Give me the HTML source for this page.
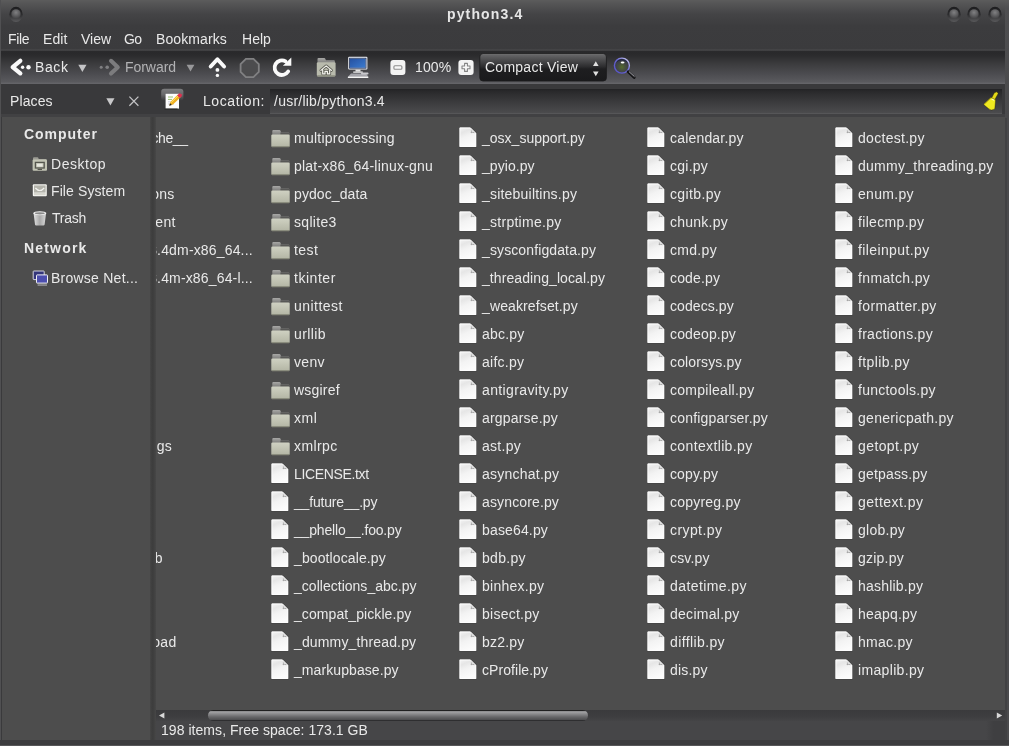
<!DOCTYPE html>
<html><head><meta charset="utf-8"><title>python3.4</title>
<style>
html,body{margin:0;padding:0}
body{width:1009px;height:746px;overflow:hidden;position:relative;background:#434345;font-family:"Liberation Sans",sans-serif;font-size:14px;color:#fff}
.t{position:absolute;will-change:transform;white-space:nowrap;line-height:16px;height:16px;color:#e9e9e9}
.b{font-weight:bold;font-size:14px}
.g{color:#b2b2b4}
.abs{position:absolute}
#title{left:0;top:0;width:1009px;height:50px;background:linear-gradient(#5c5c5c 0px,#565657 3px,#444446 14px,#3c3c3e 26px,#3b3b3d 50px)}
#tool{left:1px;top:49px;width:1004px;height:35px;background:linear-gradient(#444446 0px,#424244 1.4px,#2a2a2c 2.4px,#29292b 4px,#2c2c2e 7px,#3c3c3e 15px,#4c4c50 25px,#5a5a5e 33px,#646468 34.2px,#646468 35px)}
#locrow{left:1px;top:84px;width:1004px;height:33px;background:linear-gradient(#39393b 0,#39393b 30px,#414143 30.5px,#414143 33px)}
#entry{left:270px;top:89px;width:732px;height:25px;background:linear-gradient(#232325 0px,#2a2a2c 3px,#39393b 12px,#4b4b4d 23.6px,#565658 24.4px,#565658 25px)}
#side{left:2.2px;top:117px;width:147.8px;height:622.6px;background:#4d4d4d}
#div{left:150px;top:117px;width:6px;height:623px;background:linear-gradient(90deg,#464646,#3d3d3d 35%,#3f3f3f 60%,#474747)}
#main{left:156px;top:117px;width:849px;height:593px;background:#4d4d4d;overflow:hidden}
#hs{left:156px;top:709.5px;width:849px;height:11px;background:linear-gradient(#3a3a3c,#3e3e40 60%,#444446)}
#thumb{left:208px;top:709.6px;width:380px;height:11px;border-radius:5.5px;background:linear-gradient(#1c1c1c 0,#242424 1px,#a6a6a8 1.6px,#8a8a8c 4px,#666668 7px,#505052 9.6px,#2e2e30 10.4px,#2e2e30 11px)}
#status{left:156px;top:720.5px;width:849px;height:19.5px;background:#464648}
.ic{position:absolute}
</style></head><body>
<svg width="0" height="0" style="position:absolute">
<defs>
<linearGradient id="gf" x1="0" y1="0" x2="0" y2="1"><stop offset="0" stop-color="#cfd1c2"/><stop offset="1" stop-color="#b3b5a4"/></linearGradient>
<linearGradient id="gt" x1="0" y1="0" x2="0" y2="1"><stop offset="0" stop-color="#a8a8a6"/><stop offset="1" stop-color="#6c6c6a"/></linearGradient>
<linearGradient id="gp" x1="0" y1="0" x2="0.35" y2="1"><stop offset="0" stop-color="#f4f4f4"/><stop offset="0.28" stop-color="#e6e6e6"/><stop offset="0.55" stop-color="#f3f3f3"/><stop offset="1" stop-color="#fbfbfb"/></linearGradient>
<g id="fold">
<path d="M1.3 1 q0-1 1-1 h6 q1 0 1.3 1 l0.5 1.5 h7.2 q1 0 1 1 v3 h-17z" fill="url(#gt)"/>
<path d="M9.4 2.6 h8 q1 0 1 1 v2 h-9z" fill="#585856"/>
<rect x="0.3" y="4.6" width="18.4" height="12.4" rx="1.2" fill="url(#gf)"/>
<rect x="0.6" y="15.9" width="17.8" height="1.3" rx="0.6" fill="#8b8d7e"/>
</g>
<g id="file">
<path d="M0 0.1 h11.7 l6 6 v14.4 h-17.7z" fill="#363636" opacity="0.5"/>
<path d="M0.5 0.5 h10.9 l5.8 5.8 v13.7 h-16.7z" fill="url(#gp)"/><path d="M1 1 h10.2 l5.5 5.5 v13 h-15.7z" fill="none" stroke="#fdfdfd" stroke-width="0.9"/>
<path d="M11.4 0.5 l5.8 5.8 q-2.8-1.5-5.2-0.6 q0.9-2.4-0.6-5.2z" fill="#e2e2e2"/>
<path d="M12 5.7 q0.6-1 0.3-2.2 M12 5.7 q1.6-0.6 3.4 0" fill="none" stroke="#8e8e8e" stroke-width="0.7"/>
</g>

<linearGradient id="gscr" x1="0" y1="0" x2="1" y2="1"><stop offset="0" stop-color="#2450a0"/><stop offset="1" stop-color="#3c7cd0"/></linearGradient>
<linearGradient id="gcombo" x1="0" y1="0" x2="0" y2="1"><stop offset="0" stop-color="#949496"/><stop offset="0.05" stop-color="#646466"/><stop offset="0.3" stop-color="#434345"/><stop offset="0.48" stop-color="#2c2c2e"/><stop offset="0.56" stop-color="#1e1e20"/><stop offset="1" stop-color="#1a1a1c"/></linearGradient>
<linearGradient id="gtog" x1="0" y1="0" x2="0" y2="1"><stop offset="0" stop-color="#7c7c7e"/><stop offset="0.5" stop-color="#747476" stop-opacity="0.8"/><stop offset="1" stop-color="#6a6a6c" stop-opacity="0"/></linearGradient>
<linearGradient id="gring" x1="0" y1="1" x2="1" y2="0"><stop offset="0" stop-color="#5450c8"/><stop offset="0.55" stop-color="#6a68d4"/><stop offset="1" stop-color="#d8d8f4"/></linearGradient>
<radialGradient id="glens" cx="0.5" cy="0.6" r="0.5"><stop offset="0" stop-color="#5a7826"/><stop offset="0.55" stop-color="#46503f"/><stop offset="1" stop-color="#3a3c4c"/></radialGradient>
<linearGradient id="gtrash" x1="0" y1="0" x2="1" y2="0"><stop offset="0" stop-color="#e0e0e0"/><stop offset="0.5" stop-color="#a8a8a8"/><stop offset="1" stop-color="#d8d8d8"/></linearGradient>
<radialGradient id="gwb" cx="0.5" cy="0.35" r="0.6"><stop offset="0" stop-color="#808082"/><stop offset="1" stop-color="#48484a"/></radialGradient>
<linearGradient id="gwr" x1="0" y1="0" x2="0" y2="1"><stop offset="0" stop-color="#1c1c1e"/><stop offset="0.5" stop-color="#2c2c2e"/><stop offset="1" stop-color="#5a5a5c"/></linearGradient>
<g id="wbtn">
<ellipse cx="11" cy="10.4" rx="6.7" ry="7.6" fill="url(#gwr)"/>
<circle cx="11" cy="9.9" r="4.7" fill="url(#gwb)"/>
</g>
</defs></svg>

<div id="title" class="abs"></div>
<div class="abs" style="left:0;top:0;width:1.1px;height:746px;background:#505052"></div><div class="abs" style="left:1.1px;top:117px;width:1.2px;height:625px;background:#3a3a3c"></div>
<div class="abs" style="left:1005px;top:0;width:4px;height:746px;background:linear-gradient(#5c5c5c 0,#4f4f51 8px,#4c4c4e 60px,#4a4a4c 120px,#4a4a4c 746px)"></div><div class="abs" style="left:1005px;top:118px;width:2px;height:622px;background:#414143"></div>
<div class="abs" style="left:0;top:739.6px;width:1009px;height:6.4px;background:linear-gradient(#3c3c3e 0,#3c3c3e 4.9px,#565658 5.1px,#565658 6.4px)"></div>
<div class="t b" style="left:447.0px;top:5.95px;letter-spacing:1.139px;color:#e6e6e6">python3.4</div>
<div class="t " style="left:8px;top:31.15px;letter-spacing:-0.33px;">File</div>
<div class="t " style="left:43px;top:31.15px;letter-spacing:0.111px;">Edit</div>
<div class="t " style="left:81px;top:31.15px;letter-spacing:0.002px;">View</div>
<div class="t " style="left:124px;top:31.15px;letter-spacing:-0.537px;">Go</div>
<div class="t " style="left:156px;top:31.15px;letter-spacing:0.098px;">Bookmarks</div>
<div class="t " style="left:242px;top:31.15px;letter-spacing:0.037px;">Help</div>
<div id="tool" class="abs"></div>
<div id="locrow" class="abs"></div>
<div id="entry" class="abs"></div>
<div id="side" class="abs"></div>
<div id="div" class="abs"></div>
<div id="main" class="abs">
<svg class="ic" style="left:-73px;top:13px" width="19" height="18"><use href="#fold"/></svg>
<div class="t " style="left:-47.5px;top:13.15px;letter-spacing:-0.433px;">__pycache__</div>
<svg class="ic" style="left:-73px;top:41px" width="19" height="18"><use href="#fold"/></svg>
<div class="t " style="left:-50px;top:41.15px;letter-spacing:0.103px;">asyncio</div>
<svg class="ic" style="left:-73px;top:69px" width="19" height="18"><use href="#fold"/></svg>
<div class="t " style="left:-49px;top:69.15px;letter-spacing:0.192px;">collections</div>
<svg class="ic" style="left:-73px;top:97px" width="19" height="18"><use href="#fold"/></svg>
<div class="t " style="left:-49px;top:97.15px;letter-spacing:0.241px;">concurrent</div>
<svg class="ic" style="left:-73px;top:125px" width="19" height="18"><use href="#fold"/></svg>
<div class="t " style="left:-50px;top:125.15px;letter-spacing:0.163px;">config-3.4dm-x86_64...</div>
<svg class="ic" style="left:-73px;top:153px" width="19" height="18"><use href="#fold"/></svg>
<div class="t " style="left:-50px;top:153.15px;letter-spacing:0.159px;">config-3.4m-x86_64-l...</div>
<svg class="ic" style="left:-73px;top:181px" width="19" height="18"><use href="#fold"/></svg>
<div class="t " style="left:-50px;top:181.15px;letter-spacing:0.242px;">ctypes</div>
<svg class="ic" style="left:-73px;top:209px" width="19" height="18"><use href="#fold"/></svg>
<div class="t " style="left:-50px;top:209.15px;letter-spacing:0.003px;">curses</div>
<svg class="ic" style="left:-73px;top:237px" width="19" height="18"><use href="#fold"/></svg>
<div class="t " style="left:-50px;top:237.15px;letter-spacing:0.413px;">dbm</div>
<svg class="ic" style="left:-73px;top:265px" width="19" height="18"><use href="#fold"/></svg>
<div class="t " style="left:-50px;top:265.15px;letter-spacing:0.348px;">distutils</div>
<svg class="ic" style="left:-73px;top:293px" width="19" height="18"><use href="#fold"/></svg>
<div class="t " style="left:-50px;top:293.15px;letter-spacing:0.309px;">email</div>
<svg class="ic" style="left:-73px;top:321px" width="19" height="18"><use href="#fold"/></svg>
<div class="t " style="left:-49.2px;top:321.15px;letter-spacing:0.116px;">encodings</div>
<svg class="ic" style="left:-73px;top:349px" width="19" height="18"><use href="#fold"/></svg>
<div class="t " style="left:-50px;top:349.15px;letter-spacing:0.611px;">html</div>
<svg class="ic" style="left:-73px;top:377px" width="19" height="18"><use href="#fold"/></svg>
<svg class="ic" style="left:-73px;top:405px" width="19" height="18"><use href="#fold"/></svg>
<div class="t " style="left:-50px;top:405.15px;letter-spacing:0.317px;">idlelib</div>
<svg class="ic" style="left:-73px;top:433px" width="19" height="18"><use href="#fold"/></svg>
<div class="t " style="left:-50px;top:433.15px;letter-spacing:0.455px;">importlib</div>
<svg class="ic" style="left:-73px;top:461px" width="19" height="18"><use href="#fold"/></svg>
<div class="t " style="left:-50px;top:461.15px;letter-spacing:0.063px;">json</div>
<svg class="ic" style="left:-73px;top:489px" width="19" height="18"><use href="#fold"/></svg>
<div class="t " style="left:-50px;top:489.15px;letter-spacing:0.39px;">lib2to3</div>
<svg class="ic" style="left:-73px;top:517px" width="19" height="18"><use href="#fold"/></svg>
<div class="t " style="left:-50px;top:517.15px;letter-spacing:0.246px;">lib-dynload</div>
<svg class="ic" style="left:-73px;top:545px" width="19" height="18"><use href="#fold"/></svg>
<div class="t " style="left:-50px;top:545.15px;letter-spacing:0.268px;">logging</div>
<svg class="ic" style="left:115px;top:13px" width="19" height="18"><use href="#fold"/></svg>
<div class="t " style="left:138px;top:13.15px;letter-spacing:0.236px;">multiprocessing</div>
<svg class="ic" style="left:115px;top:41px" width="19" height="18"><use href="#fold"/></svg>
<div class="t " style="left:138px;top:41.15px;letter-spacing:0.207px;">plat-x86_64-linux-gnu</div>
<svg class="ic" style="left:115px;top:69px" width="19" height="18"><use href="#fold"/></svg>
<div class="t " style="left:138px;top:69.15px;letter-spacing:0.09px;">pydoc_data</div>
<svg class="ic" style="left:115px;top:97px" width="19" height="18"><use href="#fold"/></svg>
<div class="t " style="left:138px;top:97.15px;letter-spacing:0.299px;">sqlite3</div>
<svg class="ic" style="left:115px;top:125px" width="19" height="18"><use href="#fold"/></svg>
<div class="t " style="left:138px;top:125.15px;letter-spacing:0.448px;">test</div>
<svg class="ic" style="left:115px;top:153px" width="19" height="18"><use href="#fold"/></svg>
<div class="t " style="left:138px;top:153.15px;letter-spacing:0.538px;">tkinter</div>
<svg class="ic" style="left:115px;top:181px" width="19" height="18"><use href="#fold"/></svg>
<div class="t " style="left:138px;top:181.15px;letter-spacing:0.475px;">unittest</div>
<svg class="ic" style="left:115px;top:209px" width="19" height="18"><use href="#fold"/></svg>
<div class="t " style="left:138px;top:209.15px;letter-spacing:0.388px;">urllib</div>
<svg class="ic" style="left:115px;top:237px" width="19" height="18"><use href="#fold"/></svg>
<div class="t " style="left:138px;top:237.15px;letter-spacing:0.322px;">venv</div>
<svg class="ic" style="left:115px;top:265px" width="19" height="18"><use href="#fold"/></svg>
<div class="t " style="left:138px;top:265.15px;letter-spacing:0.205px;">wsgiref</div>
<svg class="ic" style="left:115px;top:293px" width="19" height="18"><use href="#fold"/></svg>
<div class="t " style="left:138px;top:293.15px;letter-spacing:0.538px;">xml</div>
<svg class="ic" style="left:115px;top:321px" width="19" height="18"><use href="#fold"/></svg>
<div class="t " style="left:138px;top:321.15px;letter-spacing:0.402px;">xmlrpc</div>
<svg class="ic" style="left:115px;top:346px" width="18" height="21"><use href="#file"/></svg>
<div class="t " style="left:138px;top:349.15px;letter-spacing:-0.352px;">LICENSE.txt</div>
<svg class="ic" style="left:115px;top:374px" width="18" height="21"><use href="#file"/></svg>
<div class="t " style="left:138px;top:377.15px;letter-spacing:-0.181px;">__future__.py</div>
<svg class="ic" style="left:115px;top:402px" width="18" height="21"><use href="#file"/></svg>
<div class="t " style="left:138px;top:405.15px;letter-spacing:-0.178px;">__phello__.foo.py</div>
<svg class="ic" style="left:115px;top:430px" width="18" height="21"><use href="#file"/></svg>
<div class="t " style="left:138px;top:433.15px;letter-spacing:0.113px;">_bootlocale.py</div>
<svg class="ic" style="left:115px;top:458px" width="18" height="21"><use href="#file"/></svg>
<div class="t " style="left:138px;top:461.15px;letter-spacing:0.02px;">_collections_abc.py</div>
<svg class="ic" style="left:115px;top:486px" width="18" height="21"><use href="#file"/></svg>
<div class="t " style="left:138px;top:489.15px;letter-spacing:0.087px;">_compat_pickle.py</div>
<svg class="ic" style="left:115px;top:514px" width="18" height="21"><use href="#file"/></svg>
<div class="t " style="left:138px;top:517.15px;letter-spacing:0.148px;">_dummy_thread.py</div>
<svg class="ic" style="left:115px;top:542px" width="18" height="21"><use href="#file"/></svg>
<div class="t " style="left:138px;top:545.15px;letter-spacing:0.079px;">_markupbase.py</div>
<svg class="ic" style="left:303px;top:10px" width="18" height="21"><use href="#file"/></svg>
<div class="t " style="left:326px;top:13.15px;letter-spacing:0.01px;">_osx_support.py</div>
<svg class="ic" style="left:303px;top:38px" width="18" height="21"><use href="#file"/></svg>
<div class="t " style="left:326px;top:41.15px;letter-spacing:0.051px;">_pyio.py</div>
<svg class="ic" style="left:303px;top:66px" width="18" height="21"><use href="#file"/></svg>
<div class="t " style="left:326px;top:69.15px;letter-spacing:0.206px;">_sitebuiltins.py</div>
<svg class="ic" style="left:303px;top:94px" width="18" height="21"><use href="#file"/></svg>
<div class="t " style="left:326px;top:97.15px;letter-spacing:0.267px;">_strptime.py</div>
<svg class="ic" style="left:303px;top:122px" width="18" height="21"><use href="#file"/></svg>
<div class="t " style="left:326px;top:125.15px;letter-spacing:0.117px;">_sysconfigdata.py</div>
<svg class="ic" style="left:303px;top:150px" width="18" height="21"><use href="#file"/></svg>
<div class="t " style="left:326px;top:153.15px;letter-spacing:0.087px;">_threading_local.py</div>
<svg class="ic" style="left:303px;top:178px" width="18" height="21"><use href="#file"/></svg>
<div class="t " style="left:326px;top:181.15px;letter-spacing:0.122px;">_weakrefset.py</div>
<svg class="ic" style="left:303px;top:206px" width="18" height="21"><use href="#file"/></svg>
<div class="t " style="left:326px;top:209.15px;letter-spacing:0.191px;">abc.py</div>
<svg class="ic" style="left:303px;top:234px" width="18" height="21"><use href="#file"/></svg>
<div class="t " style="left:326px;top:237.15px;letter-spacing:0.267px;">aifc.py</div>
<svg class="ic" style="left:303px;top:262px" width="18" height="21"><use href="#file"/></svg>
<div class="t " style="left:326px;top:265.15px;letter-spacing:0.371px;">antigravity.py</div>
<svg class="ic" style="left:303px;top:290px" width="18" height="21"><use href="#file"/></svg>
<div class="t " style="left:326px;top:293.15px;letter-spacing:0.178px;">argparse.py</div>
<svg class="ic" style="left:303px;top:318px" width="18" height="21"><use href="#file"/></svg>
<div class="t " style="left:326px;top:321.15px;letter-spacing:0.265px;">ast.py</div>
<svg class="ic" style="left:303px;top:346px" width="18" height="21"><use href="#file"/></svg>
<div class="t " style="left:326px;top:349.15px;letter-spacing:0.234px;">asynchat.py</div>
<svg class="ic" style="left:303px;top:374px" width="18" height="21"><use href="#file"/></svg>
<div class="t " style="left:326px;top:377.15px;letter-spacing:0.139px;">asyncore.py</div>
<svg class="ic" style="left:303px;top:402px" width="18" height="21"><use href="#file"/></svg>
<div class="t " style="left:326px;top:405.15px;letter-spacing:0.153px;">base64.py</div>
<svg class="ic" style="left:303px;top:430px" width="18" height="21"><use href="#file"/></svg>
<div class="t " style="left:326px;top:433.15px;letter-spacing:0.287px;">bdb.py</div>
<svg class="ic" style="left:303px;top:458px" width="18" height="21"><use href="#file"/></svg>
<div class="t " style="left:326px;top:461.15px;letter-spacing:0.267px;">binhex.py</div>
<svg class="ic" style="left:303px;top:486px" width="18" height="21"><use href="#file"/></svg>
<div class="t " style="left:326px;top:489.15px;letter-spacing:0.253px;">bisect.py</div>
<svg class="ic" style="left:303px;top:514px" width="18" height="21"><use href="#file"/></svg>
<div class="t " style="left:326px;top:517.15px;letter-spacing:0.188px;">bz2.py</div>
<svg class="ic" style="left:303px;top:542px" width="18" height="21"><use href="#file"/></svg>
<div class="t " style="left:326px;top:545.15px;letter-spacing:0.06px;">cProfile.py</div>
<svg class="ic" style="left:491px;top:10px" width="18" height="21"><use href="#file"/></svg>
<div class="t " style="left:514px;top:13.15px;letter-spacing:0.182px;">calendar.py</div>
<svg class="ic" style="left:491px;top:38px" width="18" height="21"><use href="#file"/></svg>
<div class="t " style="left:514px;top:41.15px;letter-spacing:0.26px;">cgi.py</div>
<svg class="ic" style="left:491px;top:66px" width="18" height="21"><use href="#file"/></svg>
<div class="t " style="left:514px;top:69.15px;letter-spacing:0.364px;">cgitb.py</div>
<svg class="ic" style="left:491px;top:94px" width="18" height="21"><use href="#file"/></svg>
<div class="t " style="left:514px;top:97.15px;letter-spacing:0.249px;">chunk.py</div>
<svg class="ic" style="left:491px;top:122px" width="18" height="21"><use href="#file"/></svg>
<div class="t " style="left:514px;top:125.15px;letter-spacing:0.308px;">cmd.py</div>
<svg class="ic" style="left:491px;top:150px" width="18" height="21"><use href="#file"/></svg>
<div class="t " style="left:514px;top:153.15px;letter-spacing:0.165px;">code.py</div>
<svg class="ic" style="left:491px;top:178px" width="18" height="21"><use href="#file"/></svg>
<div class="t " style="left:514px;top:181.15px;letter-spacing:0.081px;">codecs.py</div>
<svg class="ic" style="left:491px;top:206px" width="18" height="21"><use href="#file"/></svg>
<div class="t " style="left:514px;top:209.15px;letter-spacing:0.157px;">codeop.py</div>
<svg class="ic" style="left:491px;top:234px" width="18" height="21"><use href="#file"/></svg>
<div class="t " style="left:514px;top:237.15px;letter-spacing:0.138px;">colorsys.py</div>
<svg class="ic" style="left:491px;top:262px" width="18" height="21"><use href="#file"/></svg>
<div class="t " style="left:514px;top:265.15px;letter-spacing:0.269px;">compileall.py</div>
<svg class="ic" style="left:491px;top:290px" width="18" height="21"><use href="#file"/></svg>
<div class="t " style="left:514px;top:293.15px;letter-spacing:0.2px;">configparser.py</div>
<svg class="ic" style="left:491px;top:318px" width="18" height="21"><use href="#file"/></svg>
<div class="t " style="left:514px;top:321.15px;letter-spacing:0.36px;">contextlib.py</div>
<svg class="ic" style="left:491px;top:346px" width="18" height="21"><use href="#file"/></svg>
<div class="t " style="left:514px;top:349.15px;letter-spacing:0.121px;">copy.py</div>
<svg class="ic" style="left:491px;top:374px" width="18" height="21"><use href="#file"/></svg>
<div class="t " style="left:514px;top:377.15px;letter-spacing:0.222px;">copyreg.py</div>
<svg class="ic" style="left:491px;top:402px" width="18" height="21"><use href="#file"/></svg>
<div class="t " style="left:514px;top:405.15px;letter-spacing:0.412px;">crypt.py</div>
<svg class="ic" style="left:491px;top:430px" width="18" height="21"><use href="#file"/></svg>
<div class="t " style="left:514px;top:433.15px;letter-spacing:0.171px;">csv.py</div>
<svg class="ic" style="left:491px;top:458px" width="18" height="21"><use href="#file"/></svg>
<div class="t " style="left:514px;top:461.15px;letter-spacing:0.409px;">datetime.py</div>
<svg class="ic" style="left:491px;top:486px" width="18" height="21"><use href="#file"/></svg>
<div class="t " style="left:514px;top:489.15px;letter-spacing:0.27px;">decimal.py</div>
<svg class="ic" style="left:491px;top:514px" width="18" height="21"><use href="#file"/></svg>
<div class="t " style="left:514px;top:517.15px;letter-spacing:0.39px;">difflib.py</div>
<svg class="ic" style="left:491px;top:542px" width="18" height="21"><use href="#file"/></svg>
<div class="t " style="left:514px;top:545.15px;letter-spacing:0.199px;">dis.py</div>
<svg class="ic" style="left:679px;top:10px" width="18" height="21"><use href="#file"/></svg>
<div class="t " style="left:702px;top:13.15px;letter-spacing:0.292px;">doctest.py</div>
<svg class="ic" style="left:679px;top:38px" width="18" height="21"><use href="#file"/></svg>
<div class="t " style="left:702px;top:41.15px;letter-spacing:0.264px;">dummy_threading.py</div>
<svg class="ic" style="left:679px;top:66px" width="18" height="21"><use href="#file"/></svg>
<div class="t " style="left:702px;top:69.15px;letter-spacing:0.306px;">enum.py</div>
<svg class="ic" style="left:679px;top:94px" width="18" height="21"><use href="#file"/></svg>
<div class="t " style="left:702px;top:97.15px;letter-spacing:0.328px;">filecmp.py</div>
<svg class="ic" style="left:679px;top:122px" width="18" height="21"><use href="#file"/></svg>
<div class="t " style="left:702px;top:125.15px;letter-spacing:0.385px;">fileinput.py</div>
<svg class="ic" style="left:679px;top:150px" width="18" height="21"><use href="#file"/></svg>
<div class="t " style="left:702px;top:153.15px;letter-spacing:0.374px;">fnmatch.py</div>
<svg class="ic" style="left:679px;top:178px" width="18" height="21"><use href="#file"/></svg>
<div class="t " style="left:702px;top:181.15px;letter-spacing:0.404px;">formatter.py</div>
<svg class="ic" style="left:679px;top:206px" width="18" height="21"><use href="#file"/></svg>
<div class="t " style="left:702px;top:209.15px;letter-spacing:0.279px;">fractions.py</div>
<svg class="ic" style="left:679px;top:234px" width="18" height="21"><use href="#file"/></svg>
<div class="t " style="left:702px;top:237.15px;letter-spacing:0.412px;">ftplib.py</div>
<svg class="ic" style="left:679px;top:262px" width="18" height="21"><use href="#file"/></svg>
<div class="t " style="left:702px;top:265.15px;letter-spacing:0.252px;">functools.py</div>
<svg class="ic" style="left:679px;top:290px" width="18" height="21"><use href="#file"/></svg>
<div class="t " style="left:702px;top:293.15px;letter-spacing:0.288px;">genericpath.py</div>
<svg class="ic" style="left:679px;top:318px" width="18" height="21"><use href="#file"/></svg>
<div class="t " style="left:702px;top:321.15px;letter-spacing:0.402px;">getopt.py</div>
<svg class="ic" style="left:679px;top:346px" width="18" height="21"><use href="#file"/></svg>
<div class="t " style="left:702px;top:349.15px;letter-spacing:0.176px;">getpass.py</div>
<svg class="ic" style="left:679px;top:374px" width="18" height="21"><use href="#file"/></svg>
<div class="t " style="left:702px;top:377.15px;letter-spacing:0.475px;">gettext.py</div>
<svg class="ic" style="left:679px;top:402px" width="18" height="21"><use href="#file"/></svg>
<div class="t " style="left:702px;top:405.15px;letter-spacing:0.264px;">glob.py</div>
<svg class="ic" style="left:679px;top:430px" width="18" height="21"><use href="#file"/></svg>
<div class="t " style="left:702px;top:433.15px;letter-spacing:0.218px;">gzip.py</div>
<svg class="ic" style="left:679px;top:458px" width="18" height="21"><use href="#file"/></svg>
<div class="t " style="left:702px;top:461.15px;letter-spacing:0.212px;">hashlib.py</div>
<svg class="ic" style="left:679px;top:486px" width="18" height="21"><use href="#file"/></svg>
<div class="t " style="left:702px;top:489.15px;letter-spacing:0.216px;">heapq.py</div>
<svg class="ic" style="left:679px;top:514px" width="18" height="21"><use href="#file"/></svg>
<div class="t " style="left:702px;top:517.15px;letter-spacing:0.261px;">hmac.py</div>
<svg class="ic" style="left:679px;top:542px" width="18" height="21"><use href="#file"/></svg>
<div class="t " style="left:702px;top:545.15px;letter-spacing:0.338px;">imaplib.py</div>
</div>
<div id="hs" class="abs"></div>
<div id="thumb" class="abs"></div>
<div id="status" class="abs"></div><div class="abs" style="left:986px;top:720.5px;width:19px;height:19.5px;background:linear-gradient(90deg,rgba(62,62,64,0),#3f3f41 40%,#3f3f41)"></div>
<div class="t " style="left:161.0px;top:722.15px;letter-spacing:0.048px;">198 items, Free space: 173.1 GB</div>

<!-- window buttons -->
<svg class="ic" style="left:4.5px;top:3.6px" width="22" height="22"><use href="#wbtn"/></svg>
<svg class="ic" style="left:943px;top:3.6px" width="22" height="22"><use href="#wbtn"/></svg>
<svg class="ic" style="left:963px;top:3.6px" width="22" height="22"><use href="#wbtn"/></svg>
<svg class="ic" style="left:984px;top:3.6px" width="22" height="22"><use href="#wbtn"/></svg>

<!-- toolbar icons -->
<svg class="ic" style="left:0;top:50px" width="660" height="36">
 <!-- back -->
 <path d="M20.3 10.9 L12.7 17.1 L20.3 23.3" fill="none" stroke="#fafafa" stroke-width="4.3" stroke-linecap="round" stroke-linejoin="round"/>
 <circle cx="22.6" cy="17.3" r="1.7" fill="#fafafa"/><circle cx="28.5" cy="17.3" r="2.2" fill="#fafafa"/>
 <path d="M78.3 14.8 h8.2 l-4.1 7.2z" fill="#c4c4c6"/>
 <!-- forward -->
 <path d="M111 10.8 L117.8 17.2 L111 23.6" fill="none" stroke="#7c7c7e" stroke-width="4.1" stroke-linecap="round" stroke-linejoin="round"/>
 <circle cx="101.2" cy="17.2" r="1.5" fill="#808082"/><circle cx="107.2" cy="17.2" r="1.8" fill="#808082"/>
 <path d="M186.6 14.8 h7.8 l-3.9 6.8z" fill="#98989a"/>
 <!-- up -->
 <path d="M210.7 16.5 L217.4 9.2 L224.1 16.5" fill="none" stroke="#fafafa" stroke-width="3.9" stroke-linecap="round" stroke-linejoin="round"/>
 <circle cx="217.4" cy="19.9" r="1.9" fill="#fafafa"/><circle cx="217.4" cy="25.4" r="1.7" fill="#fafafa"/>
 <!-- stop -->
 <path d="M245.9 8.9 h7.6 l5.3 5.3 v7.6 l-5.3 5.3 h-7.6 l-5.3-5.3 v-7.6z" fill="#4c4c4e" stroke="#808082" stroke-width="1.8"/>
 <!-- reload -->
 <path d="M288.2 21.4 A7.3 7.3 0 1 1 285.6 11.4" fill="none" stroke="#fafafa" stroke-width="3.8" stroke-linecap="round"/>
 <path d="M291.3 7.4 v8.4 h-8.4z" fill="#fafafa"/>
 <!-- home folder -->
 <path d="M317.5 9 q0-1 1-1 h5.6 q1 0 1.3 1 l0.5 1.3 h8 q1 0 1 1 v4 h-17.4z" fill="url(#gt)"/>
 <rect x="316.8" y="12.2" width="18.8" height="14.2" rx="1.3" fill="#b9bbad"/>
 <rect x="317" y="25.2" width="18.2" height="1.4" rx="0.6" fill="#8b8d7e"/>
 <path d="M320.9 20.4 L326.2 15.9 L331.5 20.4 M322.7 19.9 v4 h2.3 v-2.5 h2.4 v2.5 h2.3 v-4" fill="none" stroke="#5e5f56" stroke-width="2.8" stroke-linejoin="round" stroke-linecap="round"/>
 <path d="M320.9 20.4 L326.2 15.9 L331.5 20.4 M322.7 19.9 v4 h2.3 v-2.5 h2.4 v2.5 h2.3 v-4" fill="none" stroke="#f4f4ee" stroke-width="1.2" stroke-linejoin="round" stroke-linecap="round"/>
 <!-- computer -->
 <rect x="348.2" y="6.8" width="19.2" height="12.8" rx="1" fill="#f2f4f8"/>
 <rect x="350" y="8.6" width="15.6" height="9.2" fill="url(#gscr)"/>
 <rect x="349.6" y="8.2" width="16.4" height="10" fill="none" stroke="#1a2c55" stroke-width="0.8"/>
 <rect x="355.5" y="19.6" width="5" height="2" fill="#e4e4e4"/>
 <rect x="353" y="21.4" width="10" height="1.4" rx="0.7" fill="#f0f0f0"/>
 <path d="M351 23.4 h15 l2.4 3.4 h-20.4z" fill="#a4a4aa"/>
 <rect x="347.8" y="26.6" width="20.6" height="1.5" rx="0.7" fill="#f4f4f4"/>
 <rect x="361" y="22.6" width="7.5" height="1.8" rx="0.9" fill="#c8c8cc"/>
 <!-- zoom out -->
 <rect x="390.4" y="9.9" width="15" height="15" rx="3" fill="#f3f3f3"/>
 <rect x="393.9" y="15.7" width="8" height="3.6" rx="1" fill="#f8f8f8" stroke="#8c8c8c" stroke-width="1.1"/>
 <!-- zoom in -->
 <rect x="458.4" y="9.9" width="15.2" height="15" rx="3" fill="#f3f3f3"/>
 <path d="M464.6 13.4 h2.8 v2.6 h2.6 v2.8 h-2.6 v2.6 h-2.8 v-2.6 h-2.6 v-2.8 h2.6z" fill="#f8f8f8" stroke="#848484" stroke-width="1.1" stroke-linejoin="round"/>
 <!-- combo -->
 <rect x="479.8" y="3.7" width="126.6" height="27.3" rx="3.2" fill="url(#gcombo)"/>
 <rect x="479.8" y="3.7" width="126.6" height="27.3" rx="3.2" fill="none" stroke="#1a1a1c" stroke-width="0.8"/>
 <path d="M593 16 l2.8 -4.8 l2.8 4.8z M593 21.4 h5.6 l-2.8 4.8z" fill="#e0e0e0"/>
 <!-- search -->
 <circle cx="621.9" cy="15.6" r="7" fill="url(#glens)" opacity="0.75"/>
 <path d="M616.4 12.4 A6.4 6.4 0 0 1 627.4 12.4 A8 8 0 0 0 616.4 12.4z" fill="#1c2040"/>
 <circle cx="621.9" cy="15.6" r="7.5" fill="none" stroke="url(#gring)" stroke-width="1.4"/>
 <ellipse cx="622.6" cy="12.4" rx="1.9" ry="1" fill="#ffffff"/>
 <path d="M628.2 21.8 L634.2 27.6" stroke="#141416" stroke-width="2.8" stroke-linecap="round"/>
 <path d="M629.2 21.8 L634.2 26.4" stroke="#b8b8c0" stroke-width="0.9" stroke-linecap="round"/>
</svg>

<!-- location row icons -->
<svg class="ic" style="left:0;top:84px" width="1009" height="34">
 <path d="M106.3 14.2 h8.2 l-4.1 7.4z" fill="#c8c8ca"/>
 <path d="M129.4 12.6 l9 9.2 M138.4 12.6 l-9 9.2" stroke="#c4c4c6" stroke-width="1.25" fill="none"/>
 <!-- edit toggle -->
 <rect x="161.2" y="4.8" width="22.2" height="12" rx="3" fill="url(#gtog)"/>
 <rect x="165.6" y="9.8" width="13.4" height="14.8" fill="#fdfdfd"/>
 <rect x="164.6" y="24.6" width="13" height="1.2" fill="#2a2a2a"/>
 <path d="M168 13 h5 M168 15.4 h4" stroke="#9ac070" stroke-width="1"/>
 <path d="M168 17.8 h3 M168 20 h6" stroke="#c8c8d8" stroke-width="0.8"/>
 <path d="M169.4 21.4 l1-3.4 l7.6-7.4 l2.6 2.6 l-7.6 7.4z" fill="#f0b020"/>
 <path d="M171.2 18.6 l7-6.8" stroke="#ffe060" stroke-width="1"/>
 <path d="M177.2 11.4 l1.8-1.8 q1.6-0.4 2.4 0.6 q0.8 1.2 0.2 2 l-1.8 1.8z" fill="#e03050"/>
 <path d="M169.2 21.8 l0.8-2.6 l1.9 1.9z" fill="#202020"/>
 <!-- broom -->
 <path d="M994.2 9 L996.6 7.8 L998.2 9.6 L994.6 16 L991.4 14.4z" fill="#e4d818" stroke="#2a2600" stroke-width="0.7" stroke-opacity="0.6"/>
 <path d="M991 13.6 L995.6 15.8 L994.8 25 Q991 27.4 988.4 24.6 L983.6 20.6z" fill="#f0ea20" stroke="#2a2600" stroke-width="0.7" stroke-opacity="0.6"/><path d="M991.6 15 l2.4 1.2" stroke="#fff8c0" stroke-width="1.2"/>
 <path d="M990.8 14 L984 20.4" stroke="#b8a810" stroke-width="0.8"/>
</svg>

<!-- sidebar icons -->
<svg class="ic" style="left:0;top:150px" width="60" height="140">
 <!-- desktop -->
 <path d="M33 8.2 q0-1 1-1 h3.4 q0.8 0 1 0.8 l0.3 1 h7 q0.9 0 0.9 0.9 v2 h-13.6z" fill="#9c9c94"/>
 <rect x="32.6" y="9.6" width="14.4" height="11.2" rx="1" fill="#c2c4b4"/>
 <rect x="35.4" y="12.4" width="8.8" height="5.6" fill="none" stroke="#55564e" stroke-width="1.3"/>
 <path d="M37.6 19.4 h4.4" stroke="#55564e" stroke-width="1.2"/>
 <rect x="37" y="13.8" width="5.6" height="2.8" fill="#e8e8e0"/>
 <!-- filesystem -->
 <rect x="32.8" y="34.2" width="14" height="12" rx="1" fill="#f6f6f2"/>
 <rect x="34" y="35.4" width="11.6" height="7.2" fill="#b4b4ac"/>
 <path d="M35.4 38 q4.4 5 8.8 0" fill="none" stroke="#f4f4f0" stroke-width="1.2"/>
 <rect x="34" y="43" width="11.6" height="2.2" fill="#d8d8d0"/>
 <!-- trash -->
 <path d="M33.6 63.6 h12.4 l-1.4 11 q-0.2 1-1.2 1 h-7.2 q-1 0-1.2-1z" fill="url(#gtrash)"/>
 <ellipse cx="39.8" cy="63.2" rx="6.6" ry="2" fill="#f4f4f4"/>
 <ellipse cx="39.8" cy="63.3" rx="5" ry="1.1" fill="#8a8a8a"/>
 <!-- network -->
 <rect x="33.2" y="121" width="11" height="8.6" rx="0.6" fill="#34367a" stroke="#e4e4ec" stroke-width="0.9"/>
 <rect x="36.5" y="124.9" width="11" height="8.2" rx="0.6" fill="#4c4eae" stroke="#f0f0f6" stroke-width="1"/>
 <rect x="37.6" y="134.4" width="9.4" height="1.3" fill="#a0a0a4"/>
</svg>

<!-- scrollbar arrows -->
<svg class="ic" style="left:155px;top:710px" width="850" height="11">
 <path d="M9.4 2.5 v6 l-5.4-3z" fill="#d8d8d8"/>
 <path d="M841.8 2.5 v6 l5.4-3z" fill="#d8d8d8"/>
</svg>

<div class="t " style="left:35.3px;top:59.15px;letter-spacing:0.62px;">Back</div>
<div class="t g" style="left:125.0px;top:59.15px;letter-spacing:-0.043px;">Forward</div>
<div class="t " style="left:415.0px;top:59.15px;letter-spacing:0.117px;">100%</div>
<div class="t " style="left:484.8px;top:59.15px;letter-spacing:0.254px;">Compact View</div>
<div class="t " style="left:9.5px;top:93.15px;letter-spacing:0.12px;">Places</div>
<div class="t " style="left:203.3px;top:93.15px;letter-spacing:0.575px;">Location:</div>
<div class="t " style="left:274.0px;top:93.15px;letter-spacing:0.237px;">/usr/lib/python3.4</div>
<div class="t b" style="left:24.0px;top:126.15px;letter-spacing:0.967px;">Computer</div>
<div class="t " style="left:51.0px;top:156.15px;letter-spacing:0.54px;">Desktop</div>
<div class="t " style="left:51.0px;top:183.15px;letter-spacing:0.099px;">File System</div>
<div class="t " style="left:52.0px;top:210.15px;letter-spacing:-0.246px;">Trash</div>
<div class="t b" style="left:24.0px;top:240.15px;letter-spacing:1.176px;">Network</div>
<div class="t " style="left:51.0px;top:270.15px;letter-spacing:0.242px;">Browse Net...</div>
</body></html>
